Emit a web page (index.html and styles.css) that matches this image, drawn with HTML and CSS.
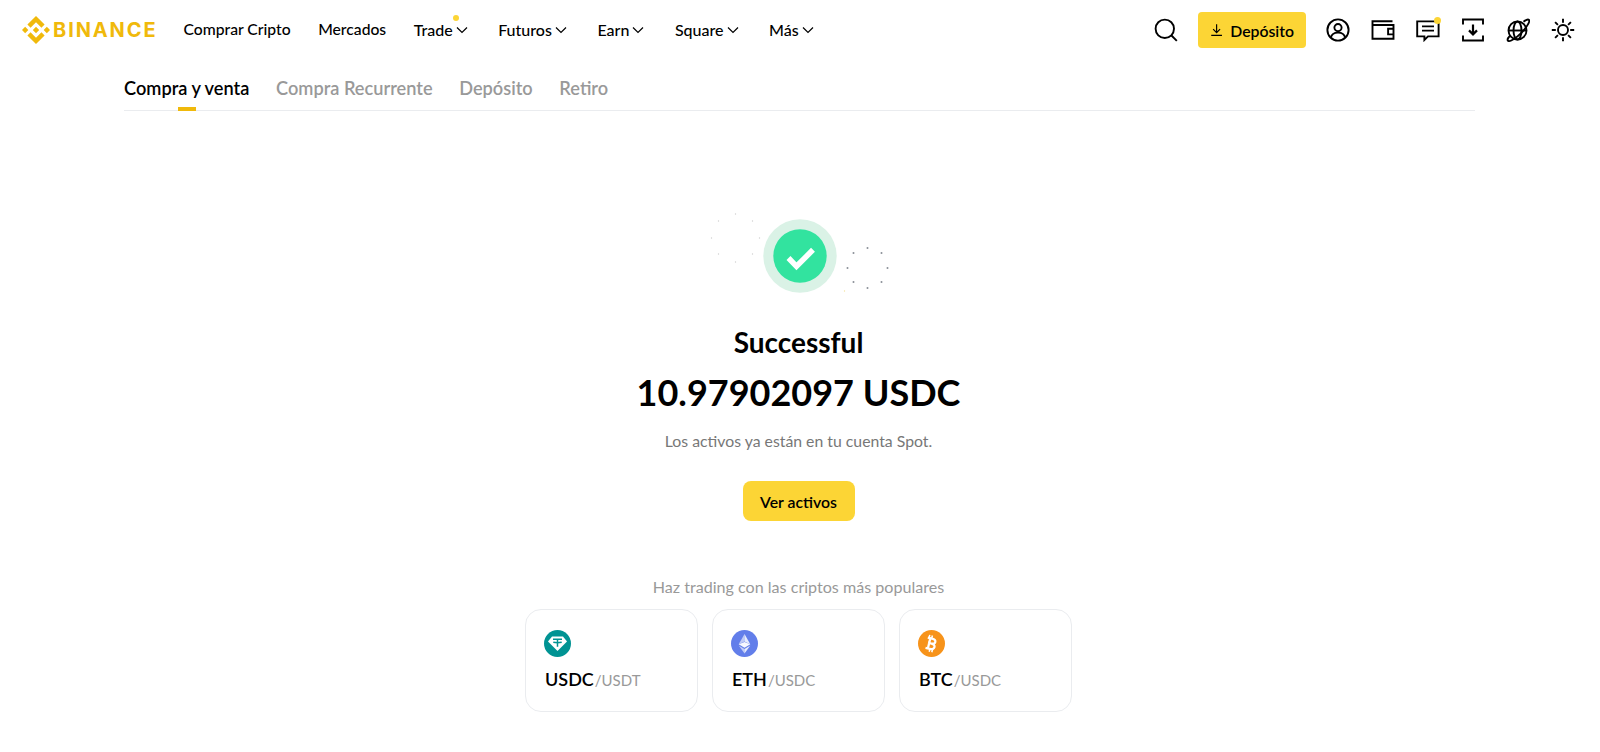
FILE: index.html
```html
<!DOCTYPE html>
<html lang="es">
<head>
  <meta charset="UTF-8" />
  <title>Binance</title>
  <link rel="stylesheet" href="styles.css">
</head>
<body>
  <header class="header">
    <a class="logo">
      <svg class="logo-mark" viewBox="0 0 126.61 126.61"><path fill="#f0b90b" d="M38.73 53.2l24.59-24.58 24.6 24.6 14.3-14.31L63.32 0 24.43 38.9zM0 63.31l14.3-14.31 14.31 14.31-14.31 14.3zM38.73 73.41l24.59 24.59 24.6-24.6 14.31 14.29-38.9 38.91-38.91-38.88zM98 63.31l14.3-14.31 14.31 14.3-14.31 14.32zM77.83 63.3L63.32 48.78 52.59 59.51l-1.24 1.23-2.54 2.54 14.51 14.5 14.51-14.47z"/></svg>
      <span class="logo-text">BINANCE</span>
    </a>
    <nav class="nav">
      <a class="nav-item">Comprar Cripto</a>
      <a class="nav-item">Mercados</a>
      <a class="nav-item has-menu has-dot">Trade<svg class="chev" viewBox="0 0 12 8"><path d="M1 1.5l5 5 5-5"/></svg></a>
      <a class="nav-item has-menu">Futuros<svg class="chev" viewBox="0 0 12 8"><path d="M1 1.5l5 5 5-5"/></svg></a>
      <a class="nav-item has-menu">Earn<svg class="chev" viewBox="0 0 12 8"><path d="M1 1.5l5 5 5-5"/></svg></a>
      <a class="nav-item has-menu">Square<svg class="chev" viewBox="0 0 12 8"><path d="M1 1.5l5 5 5-5"/></svg></a>
      <a class="nav-item has-menu">Más<svg class="chev" viewBox="0 0 12 8"><path d="M1 1.5l5 5 5-5"/></svg></a>
    </nav>
    <div class="header-right">
      <svg class="icon search-icon" viewBox="0 0 24 24"><circle cx="10.8" cy="10.8" r="9.2"/><path d="M17.5 17.5l5.3 5.3"/></svg>
      <button class="deposit-btn">
        <svg class="deposit-icon" viewBox="0 0 16 16"><path d="M8 1v10M3.8 7L8 11.2 12.2 7M1.5 14.5h13"/></svg>
        Depósito
      </button>
      <div class="icon-row">
        <svg class="icon" viewBox="0 0 24 24"><circle cx="12" cy="12" r="10.6"/><circle cx="12" cy="9.6" r="3.6"/><path d="M4.8 19.6c.8-3.4 3.6-5 7.2-5s6.4 1.6 7.2 5"/></svg>
        <svg class="icon" viewBox="0 0 24 24"><path d="M1.5 6.5V3.2h20M1.5 3.2v17.600h21V7H1.500"/><path d="M22.500 10.800h-5.400v5.600h5.400"/></svg>
        <span class="chat-wrap">
          <svg class="icon" viewBox="0 0 24 24"><path d="M1.200 3.400h21.400v15H12l-3.600 3.600v-3.600H1.200z"/><path d="M6 8.400h12M6 12.600h12"/></svg>
          <i class="chat-dot"></i>
        </span>
        <svg class="icon" viewBox="0 0 24 24"><path d="M2 6.500V1.500h20v5M2 17.500v5h20v-5"/><path d="M12 6.500v9.500M8 12.400l4 4 4-4" class="thick"/></svg>
        <svg class="icon" viewBox="0 0 24 24"><circle cx="11.500" cy="12.500" r="9"/><ellipse cx="11.500" cy="12.500" rx="4" ry="9"/><path d="M2.800 12.500h17.400"/><path d="M17.500 3.800C20 1.800 22.200 1.200 23 2c1.100 1.100-1.800 7-7.600 12.800S3.400 24.100 2 22.800c-.9-.9 0-3 2.200-5.300"/></svg>
        <svg class="icon" viewBox="0 0 24 24"><circle cx="12" cy="12" r="5"/><path d="M12 .8v4M12 19.200v4M.8 12h4M19.200 12h4M4.100 4.100l2.800 2.800M17.100 17.100l2.800 2.800M4.100 19.900l2.800-2.800M17.100 6.900l2.800-2.800"/></svg>
      </div>
    </div>
  </header>

  <div class="tabs">
    <a class="tab active">Compra y venta</a>
    <a class="tab">Compra Recurrente</a>
    <a class="tab">Depósito</a>
    <a class="tab">Retiro</a>
  </div>

  <main class="result">
    <svg class="success-art" viewBox="0 0 200 94">
      <g fill="#d0d0d0">
        <circle cx="45.500" cy="14" r=".7"/><circle cx="28.500" cy="21" r=".7"/><circle cx="62.500" cy="21" r=".7"/><circle cx="21.500" cy="38" r=".7"/><circle cx="69.500" cy="38" r=".7"/><circle cx="28.500" cy="54" r=".7"/><circle cx="62.500" cy="54" r=".7"/><circle cx="45.500" cy="62" r=".7"/>
      </g>
      <circle cx="110" cy="56" r="36.700" fill="#daf2e6"/>
      <circle cx="110" cy="56" r="26.700" fill="#32e39f"/>
      <path d="M98.500 58l8 8.300 16.500-16.500" fill="none" stroke="#fff" stroke-width="5.500"/>
      <g fill="#8a8f97">
        <circle cx="177.500" cy="48" r="1"/><circle cx="163.500" cy="53" r="1"/><circle cx="191.500" cy="53" r="1"/><circle cx="157.500" cy="68" r="1"/><circle cx="197.500" cy="68" r="1"/><circle cx="163.500" cy="82" r="1"/><circle cx="191.500" cy="82" r="1"/><circle cx="177.500" cy="88" r="1"/>
      </g>
      <circle cx="154.500" cy="91" r=".7" fill="#f3e3a0"/>
    </svg>
    <h2 class="title">Successful</h2>
    <div class="amount">10.97902097 USDC</div>
    <p class="note">Los activos ya están en tu cuenta Spot.</p>
    <button class="assets-btn">Ver activos</button>
    <p class="popular">Haz trading con las criptos más populares</p>
    <div class="pairs">
      <div class="pair">
        <svg class="coin" viewBox="0 0 27 27"><circle cx="13.500" cy="13.500" r="13.500" fill="#009393"/><path fill="#fff" d="M8 6.500h11l4 5-9.500 9.500L4 11.500z"/><path fill="none" stroke="#009393" stroke-width="1.500" d="M9 9.300h9M13.500 9.300v7.500M9.300 12.300c2.800.6 5.600.6 8.400 0"/></svg>
        <div class="pair-name">USDC<span class="pair-quote">/USDT</span></div>
      </div>
      <div class="pair">
        <svg class="coin" viewBox="0 0 27 27"><circle cx="13.500" cy="13.500" r="13.500" fill="#627eea"/><path fill="#fff" fill-opacity=".6" d="M13.500 4v7.500l-5.800 2.700z"/><path fill="#fff" d="M13.500 4v7.500l5.800 2.700z" fill-opacity=".85"/><path fill="#fff" fill-opacity=".95" d="M13.500 12l-5.800 2.300 5.800 3.400 5.800-3.400z"/><path fill="#fff" fill-opacity=".6" d="M7.700 15.500l5.800 8v-4.600z"/><path fill="#fff" fill-opacity=".85" d="M19.300 15.500l-5.800 8v-4.600z"/></svg>
        <div class="pair-name">ETH<span class="pair-quote">/USDC</span></div>
      </div>
      <div class="pair">
        <svg class="coin" viewBox="0 0 27 27"><circle cx="13.500" cy="13.500" r="13.500" fill="#f7931a"/><path fill="none" stroke="#fff" stroke-width="2.300" d="M9.800 7.600l4.400 1c2.600.6 3.500 1.800 3.100 3.400-.4 1.600-1.700 2.100-4.100 1.500l-3.200-.8M12.800 13.500c2.900.7 4.100 1.900 3.700 3.600-.4 1.800-2 2.300-4.600 1.700l-4.400-1M12.300 8.300l-2.300 9.700"/><path fill="none" stroke="#fff" stroke-width="1.500" d="M14.400 5.500l-.7 2.800M11.800 4.900l-.7 2.800M11.900 18.900l-.7 2.800M14.500 19.500l-.7 2.800"/></svg>
        <div class="pair-name">BTC<span class="pair-quote">/USDC</span></div>
      </div>
    </div>
  </main>
</body>
</html>
```

FILE: styles.css
```css
* {
  box-sizing: border-box;
}

body {
  margin: 0;
  background: #fff;
  color: #000;
  font-family: "Lato", "Open Sans", sans-serif;
}

button {
  font-family: inherit;
  border: none;
  cursor: pointer;
}

.header {
  display: flex;
  align-items: center;
  height: 60px;
  padding: 0 25px 0 22px;
}

.logo {
  display: flex;
  align-items: center;
  gap: 3px;
  margin-right: 26px;
}

.logo-mark {
  width: 28px;
  height: 28px;
}

.logo-text {
  color: #f0b90b;
  font-family: "Inter", sans-serif;
  font-size: 20px;
  font-weight: 700;
  letter-spacing: 1.9px;
}

.nav {
  display: flex;
  gap: 27.5px;
  margin-bottom: 2px;
}

.nav-item {
  position: relative;
  display: flex;
  align-items: center;
  gap: 3px;
  font-size: 15.7px;
  font-weight: 500;
  white-space: nowrap;
}

.has-menu {
  padding-right: 3px;
  font-size: 16px;
}

.has-dot::after {
  content: "";
  position: absolute;
  top: -5px;
  left: 39px;
  width: 6px;
  height: 6px;
  border-radius: 50%;
  background: #fcd535;
}

.chev {
  width: 12px;
  height: 8px;
  margin-top: 2px;
  fill: none;
  stroke: #000;
  stroke-width: 1.2;
}

.header-right {
  display: flex;
  align-items: center;
  margin-left: auto;
}

.icon {
  display: block;
  width: 24px;
  height: 24px;
  fill: none;
  stroke: #000;
  stroke-width: 1.900;
}

.thick {
  stroke-width: 2.200;
}

.deposit-btn {
  display: flex;
  align-items: center;
  gap: 7px;
  height: 36px;
  width: 108px;
  margin: 0 20px;
  padding: 0 12px;
  border-radius: 4px;
  background: #fcd535;
  font-size: 15.8px;
  font-weight: 600;
  color: #000;
}

.deposit-icon {
  width: 16px;
  height: 16px;
  fill: none;
  stroke: #000;
  stroke-width: 1.400;
}

.icon-row {
  display: flex;
  gap: 21px;
}

.chat-wrap {
  position: relative;
  display: block;
}

.chat-dot {
  position: absolute;
  top: -1px;
  right: -1px;
  width: 7px;
  height: 7px;
  border-radius: 50%;
  background: #fcd535;
}

.tabs {
  display: flex;
  gap: 26.7px;
  height: 51px;
  margin: 0 125px 0 124px;
  border-bottom: 1px solid #eaecef;
}

.tab {
  position: relative;
  padding-top: 17px;
  color: #999;
  font-size: 18.2px;
  font-weight: 600;
}

.tab.active {
  color: #000;
}

.tab.active::after {
  content: "";
  position: absolute;
  left: 54px;
  bottom: -1px;
  width: 18px;
  height: 4px;
  background: #f0b90b;
}

.result {
  display: flex;
  flex-direction: column;
  align-items: center;
  padding-right: 3px;
}

.success-art {
  display: block;
  width: 200px;
  height: 94px;
  margin: 89px 0 0 -18px;
}

.title {
  margin: 32px 0 0;
  font-size: 28px;
  line-height: 32px;
  font-weight: 700;
}

.amount {
  margin-top: 12px;
  font-size: 36px;
  line-height: 44px;
  font-weight: 700;
}

.note {
  margin: 17px 0 0;
  color: #777;
  font-size: 15.8px;
  line-height: 20px;
}

.assets-btn {
  width: 112px;
  height: 40px;
  margin-top: 30px;
  border-radius: 8px;
  background: #fcd535;
  color: #000;
  font-size: 15.8px;
  font-weight: 600;
}

.popular {
  margin: 56px 0 0;
  color: #999;
  font-size: 16.1px;
  line-height: 20px;
}

.pairs {
  display: flex;
  gap: 14px;
  margin-top: 12px;
}

.pair {
  width: 173px;
  height: 103px;
  padding: 20px 18px 20px 19px;
  border: 1px solid #eaecef;
  border-radius: 16px;
}

.coin {
  display: block;
  width: 27px;
  height: 27px;
  margin-left: -1px;
}

.pair-name {
  margin-top: 10px;
  font-size: 18px;
  line-height: 24px;
  font-weight: 600;
}

.pair-quote {
  margin-left: 1px;
  color: #999;
  font-size: 15px;
  font-weight: 400;
}
```
